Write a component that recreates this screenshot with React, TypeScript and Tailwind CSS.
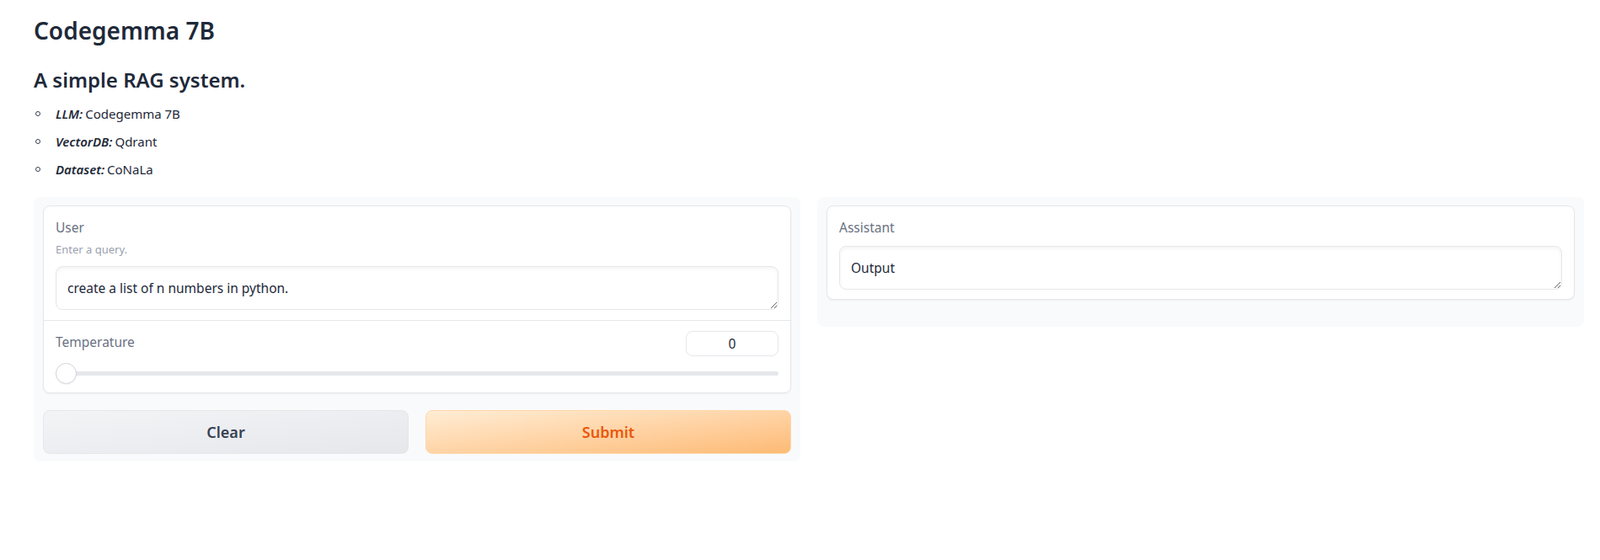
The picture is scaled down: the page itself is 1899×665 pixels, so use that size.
import React from 'react';

const font = { fontFamily: '"Noto Sans", "Liberation Sans", sans-serif' };

const Bullet: React.FC<{ label: string; value: string }> = ({ label, value }) => (
  <li className="flex items-center leading-[24px] text-[15px] text-gray-800">
    <span className="w-[6px] h-[6px] rounded-full border border-gray-700 ml-[2px] mr-[18px]"></span>
    <span className="font-semibold italic mr-[3px]">{label}</span>
    <span>{value}</span>
  </li>
);

const Label: React.FC<{ children: React.ReactNode }> = ({ children }) => (
  <div className="text-[15.5px] leading-[20px] text-gray-500">{children}</div>
);

const TextBox: React.FC<{ value: string }> = ({ value }) => (
  <textarea
    readOnly
    rows={1}
    defaultValue={value}
    className="block w-full h-[52px] px-[13px] py-[14px] text-[15.5px] leading-[22px] text-gray-800 bg-white border border-gray-200 rounded-lg shadow-inner outline-none"
  />
);

const Slider: React.FC<{ value: number; max: number }> = ({ value, max }) => (
  <div className="relative h-[25px] flex items-center">
    <div className="w-full h-[5px] rounded-full bg-gray-200"></div>
    <div
      className="absolute top-0 w-[25px] h-[25px] rounded-full bg-white border border-gray-300 shadow-xs"
      style={{ left: `${(value / max) * 100}%` }}
    ></div>
  </div>
);

export default function App() {
  return (
    <div className="min-h-[665px] bg-white pl-[40px] pr-[19px] pt-[19px]" style={font}>
      <h1 className="text-[28px] leading-[34px] font-semibold text-gray-800">Codegemma 7B</h1>
      <h2 className="mt-[27px] text-[24px] leading-[29px] font-semibold text-gray-800">A simple RAG system.</h2>
      <ul className="mt-[14px] flex flex-col gap-[9px]">
        <Bullet label="LLM:" value="Codegemma 7B" />
        <Bullet label="VectorDB:" value="Qdrant" />
        <Bullet label="Dataset:" value="CoNaLa" />
      </ul>

      <div className="mt-[21px] flex items-start gap-[20px]">
        {/* Input column */}
        <div className="flex-1 bg-gray-50 rounded-lg px-[11px] pt-[10px] pb-[9px] flex flex-col gap-[20px]">
          <div className="bg-white border border-gray-200 rounded-lg shadow-xs">
            <div className="px-[14px] pt-[15px] pb-[12px]">
              <Label>User</Label>
              <div className="mt-[7px] text-[13px] leading-[18px] text-gray-400">Enter a query.</div>
              <div className="mt-[11px]">
                <TextBox value="create a list of n numbers in python." />
              </div>
            </div>
            <div className="border-t border-gray-200 px-[14px] pt-[12px] pb-[10px]">
              <div className="flex items-start justify-between">
                <div className="mt-[3px]">
                  <Label>Temperature</Label>
                </div>
                <input
                  readOnly
                  defaultValue="0"
                  className="w-[110px] h-[30px] text-center text-[15.5px] text-gray-800 bg-white border border-gray-200 rounded-lg outline-none"
                />
              </div>
              <div className="mt-[8px]">
                <Slider value={0} max={1} />
              </div>
            </div>
          </div>
          <div className="flex gap-[20px]">
            <button className="flex-1 h-[52px] rounded-lg border border-gray-200 bg-linear-to-br from-gray-100 to-gray-200 text-[18px] font-semibold text-gray-700">
              Clear
            </button>
            <button className="flex-1 h-[52px] rounded-lg border border-[#fed7aa] bg-linear-to-br from-[#ffedd5] to-[#fdba74] text-[18px] font-semibold text-[#ea580c]">
              Submit
            </button>
          </div>
        </div>

        {/* Output column */}
        <div className="flex-1 bg-gray-50 rounded-lg px-[11px] pt-[10px] pb-[32px]">
          <div className="bg-white border border-gray-200 rounded-lg shadow-xs px-[14px] pt-[15px] pb-[11px]">
            <Label>Assistant</Label>
            <div className="mt-[12px]">
              <TextBox value="Output" />
            </div>
          </div>
        </div>
      </div>
    </div>
  );
}
